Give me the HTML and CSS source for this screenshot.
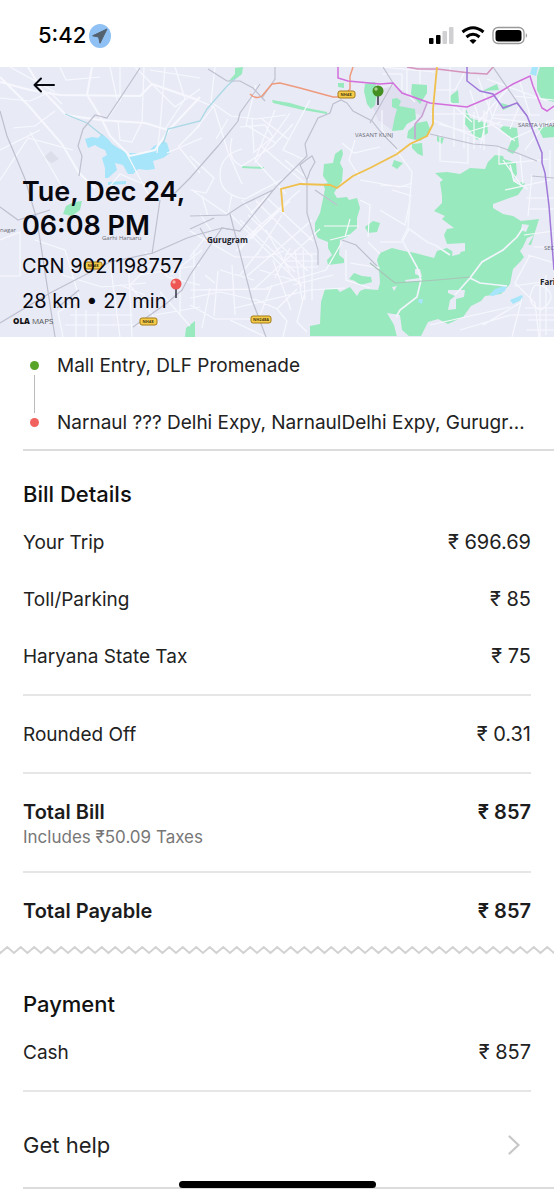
FILE: index.html
```html
<!DOCTYPE html>
<html lang="en">
<head>
<meta charset="utf-8">
<meta name="viewport" content="width=device-width, initial-scale=1">
<title>Ride bill</title>
<link rel="stylesheet" href="styles.css">
</head>
<body>
<header class="status">
  <div class="status-left">
    <span class="clock">5:42</span>
    <svg class="location" viewBox="0 0 22 24" aria-hidden="true"><ellipse cx="11" cy="12" rx="11" ry="12" fill="#8fc1f4"/><path d="M18 5 3.600 11.800l6 1.200 1.400 6.200z" fill="#54616e" stroke="#54616e" stroke-linejoin="round"/></svg>
  </div>
  <svg class="signals" viewBox="0 0 100 20" aria-hidden="true">
    <g><rect x="0" y="12" width="4.500" height="6" rx="1"/><rect x="7" y="9" width="4.500" height="9" rx="1"/><rect x="13.500" y="5" width="4.500" height="13" rx="1" fill="#d0d0d2"/><rect x="20" y="1" width="4.500" height="17" rx="1" fill="#d0d0d2"/></g>
    <g fill="none" stroke="#000" stroke-width="3"><path d="M33.500 6q10.500-8.500 21 0M37.500 11q6.500-5.500 13 0"/></g><path d="m40.500 14.500q3.500-2.500 7 0L44 18z"/>
    <rect x="64" y="1.500" width="31" height="16" rx="5" fill="none" stroke="#999" stroke-width="1.300"/><rect x="66.500" y="4" width="26" height="11.500" rx="3"/><path d="M96.800 7q2.500 2.500 0 5z" fill="#999"/>
  </svg>
</header>

<main>
  <section class="hero">
    <svg class="map" viewBox="0 67 554 270" preserveAspectRatio="xMidYMid slice" role="img" aria-label="Trip map">
      <rect y="67" width="554" height="270" fill="#e8eaf6"/>
      <path d="M367 92 394 86 428 104 422 116 404 108 392 130 378 120z" fill="#dfdff0"/>
      <path d="m43 158 8-7 8 8-7 4z" fill="#dcdeea"/>
      <g fill="#98e9bd">
        <path d="m63 214 3-8 8-4 8-1-2 9-8 6zM185 337l1-9 9-7v16zM228 82l7-8v-6l8-1-1 7-5 4zM272 100l18 3 17 5 20 4v2l-24-4-30-7zM242 166l22 1v2l-22-1z"/>
        <path d="M342 149l1 5-3 9 3 6-1 12-5 7-3 5 3 5 10-1 2 3 8-2 3 10-3 10v10l-10 9-7 3-1 15 5 4v4l-16 2-1-5 5-5-4-7v-6l-10-4-3-6v-9l5-10 3-14 2-10-2-5 5-1-5-7 1-12 9-1 2-9z"/>
        <path d="m365 227 8-6 7 2-3 9-9 1zM349 279l5-6 8 3 9 1 1 5-12 3-5-4zM365 84l10-2 2 10-2 13-4 4-4-5-3-13zM338 83h6v5l-6-1z"/>
        <path d="m412 84 15 1v8l-7 11-9-10zM392 99l5-1 4 3-2 5 16 3 1 10-9 5-4 6-11 1 3-15 2-7-5-2zM417 123l10-2 3 8-1 5-9 7-13-3 1-7zM412 144l10-1 1 13-5-2-6-6zM394 160l9 3-6 6-5-3z"/>
        <path d="m450 96 8-6 1 13h-9zM466 109l4 9 17 5 1 10-11 7-12-16zM503 126l14 2 2 18-6 8-6-3 5-12-12-10zM437 136l7 2-2 6-5-3zM482 91l15-7 2 6zM501 103l11 3-9 4zM537 76l3-9h14v35l-13-4-4-8zM538 128l16-2v11l-11 1z"/>
        <path d="m435 173 12-1 13 2 10-6 15 1 3-7 7-7 8 1 1 3 12 4 1 11-4 7 12 2-2 5-5 7-14 5-11 4v4l10 6 10 2 8 5 18-2-4 13-4 13-6-1-5 7 4 6-4 5-7 7-3 15-9 10-16 2-4 5-10 5-8 11-15 7-10-5-10 3-7 14H310v-10l10-2 1-22 4-13h12l3 3 10-5 7 9 3-5 5-2 13 1 2-7-1-15-2-8 3-7 12-5 12 3 11 2 19 5 3-7 10-3 8 5 10-2v-8l-18 1-3-9 3-6 7-1-12-9 3-3-11-5 8-8v-7l-2-14 3-2z"/>
      </g>
      <g fill="#e8eaf6"><path d="m453 247 10-2-3 9-8 2zM448 290h17l-1 7-8 2v10l-8 1 2-10 5-4-7-3zM387 313l13 2 2 15 8 7h-13l-3-12zM405 280l15-2 1 3-15 1zM415 269h5l2 8-7-3zM392 287l5-1-3 5zM522 224l7 1-3 7-5-2zM534 235l-6 10-5 2 4-9z"/></g>
      <g fill="#a6e5fa">
        <path d="m85 139 7-2 6 1 4-4 6 5 4 5 6 4 10 5h19l7-7 6-2 3-3 4 2 3 10-7 5-10 3 2 8-8 1-9-1-5 5h-5l-5-9-8-2 2 7-9 8h-3v-10l-3-10 5-3-2-5-5-2-5-3-7 3zM108 182l18-1v3l-18 1z"/>
        <path d="m489 295 6-6 12-4-2 6-12 5zM510 300l12-5 1 4-10 5zM419 299h4l-1 5-4-2zM532 67h6l-2 9-6-2z"/>
      </g>
      <g fill="none" stroke="#f7f8fe" stroke-width="1.200">
        <path stroke-width="2" d="M0 77 28 105 62 144 79 173 95 188M92 67 87 95 100 116 110 136 130 156 155 150 169 130 200 97M0 82 30 90 60 95 140 96 152 84 198 100M28 67 42 90 66 115 100 120 145 123 168 130"/>
        <path d="M0 98 30 101 50 92 62 104M10 67 55 92M60 67 66 80 100 77M110 67 118 103 108 118M120 67v35M135 67l40 40 25-18M150 70l50 8M165 67l-5 61-3 25M118 121l2 19 12 2 10-20M144 67l-2 55M178 146l22 27M167 153l35-15M0 180l28-42 45 12M13 128l22-2 20-15M30 132l32 55M0 150l40-20M175 67l10 32-20 30M127 154l21 40M200 125l-22 22M100 198l20-24 60 26M0 240l20-8v44H0M35 240l30 10 15 50-22 12 5 25M62 275l40 12 44-4M110 262l10 75M128 258l4 79M70 315h63M65 325h76M76 310v27M86 310v27M98 312v25M120 285l25 10M145 252l23 25 32 8M150 265l-20 20 30 40M160 292l30 34M170 275l32-25M155 315l45-8M180 265v50M194 250v57M140 275l60-10"/>
        <path d="M190 97l24 10 14 45 14 32M190 136l24-30M215 67l-4 35 20 14 25 3 30-4M228 119l-12 20M190 156l24 22-8 15-16-3M232 138q-6 22 10 28l31-20 20-22M240 127l25-2 8 12-20 16M252 118l2 35M262 119l26 20M256 85l-10 40 30 18M275 110l-20 50 31 34M290 113l-35 50M310 100l-27 50 22 10M220 175q0-20 22-26M220 175q0 20 25 24l38-20M232 194l-4 20M242 200l19 24-22 27M192 190l35 24M200 214l12 18M202 196l6 20M285 160l24 20M260 145l47 40M275 188l-24 25M283 205l-32 34M300 190l-54 48"/>
        <path d="M248 215l60 56M256 201l56 56M265 196l48 45M290 201l-54 50M312 220l-66 57M320 229l-66 60M240 220l55 52M230 214l72 72M260 250l-20 25M266 230l24 42M282 215l-25 40M190 231l45 26h31l18-6M190 257l18-23M190 290l80-1M218 271l-4 45M205 275l10 8M220 270l34 10M210 288l-8 40M232 265l3 50M190 298l30-6 35 8M190 305l25 14h38M235 308l75-18 35-2M260 270l40 12M273 260l18 50M295 250l7 50M285 261h33M285 254h33M285 267h33M303 250l2 50M312 255v45M290 248l-15 30M255 299l22 10 10 12-4 16M277 309l20-20M305 292l-8 30 10 10M272 285l-12 30M230 320l36 17"/>
        <path d="M324 226h35M342 242l-16 28-60 18M330 240l20-5M345 237l5-18M346 250v30l24 8M350 263l30 5M333 275l-40 10M360 200l10 5-2 32M368 242l12 12M380 242h22l8-14M410 200l-5 25-25-15M382 110v20l30 42-4 50M380 185l30 2M392 190l20 6M360 180l40 7 12-4M342 143l12 10 26-6M355 140l-6 20 10 16"/>
        <path d="M380 67l55 5M382 74h20v16M407 69v25l8 8M420 69v15M437 90h18l12-22M450 67v35l22 20M430 114h38l35 12M438 124l30 8 33-10M440 134v27l28 2v-26M454 107v40M464 108v40M474 112v37M484 110v40M490 100l-10 48M500 98l-10 25 25 18M433 120l50 20M470 90l10 32M510 86l-32 36M478 78l15 40 50 6M520 82l10 33M514 96l40 4M520 104l-10 25M499 146v18l50-5M520 154l3 30M503 160l18 25M487 79l60 22M494 115h46M548 120l-23 30M510 140l44-20M550 150v30l-45 10M532 174l-4 42M526 198h28M528 209h26M524 235l30-4M534 247h20M528 255l26 8M530 255l-15 28 20 20 4 34M514 286l40-6M510 307l-80 18M520 303l-37 22M526 330h28M528 320h26M522 298l-10 39M540 278v59M546 275v60M535 285q-12 18 6 25 17-12 5-22-5-4-11-3M525 308h29M554 315h-44l-50 15"/>
      </g>
      <g fill="none" stroke="#f2f5fc" stroke-width="1.700"><path d="m523 228-6 9-14 13-21 12-12 16-15 17M470 278l10 5 27 3M410 200l-2 28 19 14 8 3 15 10M408 228l-6 12 15 27 4 13-4 17-17 13-4 7M510 165l4 16 14 8"/></g>
      <g fill="none" stroke="#abd9e5" stroke-width="1.300"><path d="m65 114 22 9 16 13M163 144l5-15 32-8 7-12 20-23 9-8"/></g>
      <g fill="none" stroke="#bfc0cf" stroke-width="1.200">
        <path d="m0 111 7 25 18 43 12 41 18 117M140 68l-33 50-12-3-12 14-5 17 4 10-3 20M0 323l50-30 60-31 43-9 34-15 13-4 22-6 18 3 22-27M0 207l18 13 32-10M160 200l-8 54M79 290l-22 18M208 69l19 12 13 0 13 7 12 13M260 84l-10 15-10 14-2 8-20 25-28 32-17 17"/>
        <path d="m275 67v12l-13 19M347 103l-6-3-8 4-3 9-12 5-13 26 2 12-32 32-13 16M347 103l6 8 19 10 8 10 17 18M393 83l-23 40M306 160l6-4 3 6-5 9-3 9-7-15zM307 180v33l11 37v15M190 216l37-1 15-10 33-16M190 229l24-11M230 214l22 86 14 37M200 228l7 12M240 231l-18-3-15 22-17 25-8 15-15 13-34 24M315 190l22 15M342 240l14 5 21 21M430 134l43 10 24 2 20 7 20 8M383 67l10 16M493 67l20 29 14 20M532 176l22 2"/>
        <path stroke="#a9c3b9" d="m370 263 25 20 42-3 33-3"/>
      </g>
      <g fill="none" stroke-width="1.500">
        <path stroke="#c9a0d3" d="m427 103-5 13-7 8v15"/>
        <path stroke="#ee9a7d" d="M250 94q6 6 12 2l10-12 8-1 20 5 33 9h10l7-8V76l3-9"/>
        <path stroke="#d36fdc" d="m338 67v11l10 3 32 3 13-1 9 10 28 10 37 4 26-11 20-12 17-8 3 10 9 22 5 3 7-5"/>
        <path stroke="#d593bd" d="m407 67 11 2h19l33 4 17 1 6-7"/>
        <path stroke="#9f78d9" d="m467 67v14l13 10 13 3 10 14 14-5 10 13 15 37v10l3 10 4 33 5 64"/>
        <path stroke="#efc04d" stroke-width="1.800" d="m437 67-4 42v15l-6 12-17 8-13 10-27 14-17 8-16 12-7-3-30-1-19 5 2 23"/>
      </g>
      <g class="map-badge"><rect x="338" y="91" width="17" height="7" rx="2"/><text x="346" y="96">NH48</text><rect x="85" y="262" width="17" height="7" rx="2"/><text x="93" y="267">NH48</text><rect x="140" y="318" width="17" height="7" rx="2"/><text x="148" y="323">NH48</text><rect x="251" y="316" width="20" height="7" rx="2"/><text x="261" y="321">NH248A</text></g>
      <g class="map-area"><text x="355" y="137">VASANT KUNJ</text><text x="518" y="127">SARITA VIHAR</text><text x="544" y="250">SECTOR</text><text x="102" y="240">Garhi Harsaru</text><text x="0" y="232">nagar</text></g>
      <g class="map-city"><text x="207" y="243">Gurugram</text><text x="540" y="285">Faridabad</text></g>
      <g class="map-brand"><text x="13" y="324"><tspan class="map-ola">OLA</tspan> MAPS</text></g>
      <path d="M378 95v10" stroke="#334" stroke-width="1.500"/><circle cx="378" cy="91" r="5.500" fill="#438f22"/><circle cx="376" cy="89" r="1.700" fill="#a9d38b"/>
      <path d="M176 288v10" stroke="#334" stroke-width="1.500"/><circle cx="176" cy="284" r="5.500" fill="#ed5652"/><circle cx="174" cy="282" r="1.700" fill="#f9b0a5"/>
    </svg>
    <div class="hero-content">
      <button class="back" type="button" aria-label="Back"><svg viewBox="0 0 22 16" aria-hidden="true"><path d="M21 8H1.500M8 1.500 1.500 8 8 14.500" fill="none" stroke="#080810" stroke-width="2" stroke-linecap="round" stroke-linejoin="round"/></svg></button>
      <h1>Tue, Dec 24,<br>06:08 PM</h1>
      <p class="meta">CRN 9021198757</p>
      <p class="meta">28 km • 27 min</p>
    </div>
  </section>

  <ol class="route">
    <li class="stop pickup">Mall Entry, DLF Promenade</li>
    <li class="stop drop">Narnaul ??? Delhi Expy, NarnaulDelhi Expy, Gurugram, Haryana</li>
  </ol>

  <section class="bill">
    <h2>Bill Details</h2>
    <dl class="group">
      <div class="row"><dt>Your Trip</dt><dd>₹ 696.69</dd></div>
      <div class="row"><dt>Toll/Parking</dt><dd>₹ 85</dd></div>
      <div class="row"><dt>Haryana State Tax</dt><dd>₹ 75</dd></div>
    </dl>
    <dl class="group">
      <div class="row"><dt>Rounded Off</dt><dd>₹ 0.31</dd></div>
    </dl>
    <dl class="group subtotal">
      <div class="row total"><dt>Total Bill<small>Includes ₹50.09 Taxes</small></dt><dd>₹ 857</dd></div>
    </dl>
    <dl class="group">
      <div class="row total"><dt>Total Payable</dt><dd>₹ 857</dd></div>
    </dl>
  </section>

  <svg class="tear" aria-hidden="true"><defs><pattern id="zigzag" width="27" height="10" patternUnits="userSpaceOnUse"><path d="M-6.500 2 .500 8 7.250 2 14 8 20.750 2 27.500 8 34 2" fill="none" stroke="#d2d2d2" stroke-width="2"/></pattern></defs><rect width="100%" height="10" fill="url(#zigzag)"/></svg>

  <section class="payment">
    <h2>Payment</h2>
    <dl class="group">
      <div class="row"><dt>Cash</dt><dd>₹ 857</dd></div>
    </dl>
  </section>

  <a class="help" href="#help">Get help<svg viewBox="0 0 12 20" aria-hidden="true"><path d="m1.500 1.500 9 8.500-9 8.500" fill="none" stroke="#c7c7c9" stroke-width="2.200" stroke-linecap="round"/></svg></a>
</main>
<div class="home"></div>
</body>
</html>
```
FILE: styles.css
```css
* { box-sizing: border-box; }

body {
  margin: 0;
  background: #fff;
  color: #222;
  font: 19px/25px Inter, "Liberation Sans", sans-serif;
}

h1, h2, p, dl, dd, ol { margin: 0; padding: 0; font-weight: 400; }

.status {
  display: flex;
  align-items: center;
  justify-content: space-between;
  height: 67px;
  padding: 4px 25px 0 38px;
  color: #000;
}
.status-left { display: flex; align-items: center; gap: 3px; }
.clock { font-size: 22px; font-weight: 500; }
.location { width: 22px; height: 24px; }
.signals { width: 100px; height: 20px; }

.hero { position: relative; overflow: hidden; color: #080810; }
.map { position: absolute; inset: 0; width: 100%; height: 100%; }
.hero-content { position: relative; padding: 10px 22px 23px; }
.back {
  display: block;
  margin: 0 0 82px 8px;
  padding: 0 3px;
  border: 0;
  background: none;
}
.back svg { display: block; width: 22px; height: 16px; }
h1 { margin-bottom: 11px; font-size: 27px; font-weight: 600; line-height: 34px; }
.meta { font-size: 20px; line-height: 25px; }
.meta + .meta { margin-top: 10px; }

.map text { font-family: "Open Sans", "Noto Sans", sans-serif; }
.map-badge rect { fill: #f5cc4a; stroke: #a57b19; stroke-width: 1; }
.map-badge text { font-size: 4px; font-weight: 700; fill: #4c3a10; text-anchor: middle; }
.map-area text { font-size: 6px; fill: #686a75; }
.map-city text { font-size: 8px; font-weight: 700; fill: #202026; }
.map-brand text { font-size: 8px; fill: #555; }
.map-brand .map-ola { font-weight: 800; fill: #111; }

.route {
  display: grid;
  gap: 31px;
  margin-left: 23px;
  padding: 16px 23px 13px 0;
  border-bottom: 2px solid #dcdcdc;
  list-style: none;
}
.stop {
  position: relative;
  min-width: 0;
  padding-left: 34px;
  line-height: 26px;
}
.drop { overflow: hidden; text-overflow: ellipsis; white-space: nowrap; }
.stop::before {
  content: "";
  position: absolute;
  top: 8px;
  left: 7px;
  width: 9px;
  height: 9px;
  border-radius: 50%;
  background: #58a429;
}
.drop::before { background: #f1625e; }
.pickup::after {
  content: "";
  position: absolute;
  top: 22px;
  left: 11px;
  width: 1px;
  height: 38px;
  background: #bbb;
}

.bill { padding: 28px 23px 0; }
.payment { padding: 34px 23px 0; }
h2 { margin-bottom: 5px; color: #111; font-size: 22px; font-weight: 500; line-height: 30px; }
.group { padding-bottom: 9px; border-bottom: 2px solid #e6e6e6; }
.group + .group { padding-top: 10px; }
.bill .subtotal { padding-bottom: 5px; }
.bill .group:last-child { padding-bottom: 5px; border-bottom: 0; }
.row { display: flex; justify-content: space-between; gap: 16px; padding: 16px 0; }
dd { font-size: 20px; }
.total { color: #1c1c1c; font-size: 20px; }
.total dt, .total dd { font-weight: 600; }
small { display: block; color: #777; font-size: 17px; font-weight: 400; }

.tear { display: block; width: 100%; height: 10px; }

.help {
  display: flex;
  align-items: center;
  justify-content: space-between;
  margin-left: 23px;
  padding: 38px 34px 27px 0;
  border-bottom: 2px solid #dcdcdc;
  color: #222;
  font-size: 22px;
  line-height: 30px;
  text-decoration: none;
}
.help svg { width: 12px; height: 20px; }

.home {
  position: fixed;
  bottom: 12px;
  left: 50%;
  width: 197px;
  height: 7px;
  margin-left: -98px;
  border-radius: 4px;
  background: #000;
}
```
